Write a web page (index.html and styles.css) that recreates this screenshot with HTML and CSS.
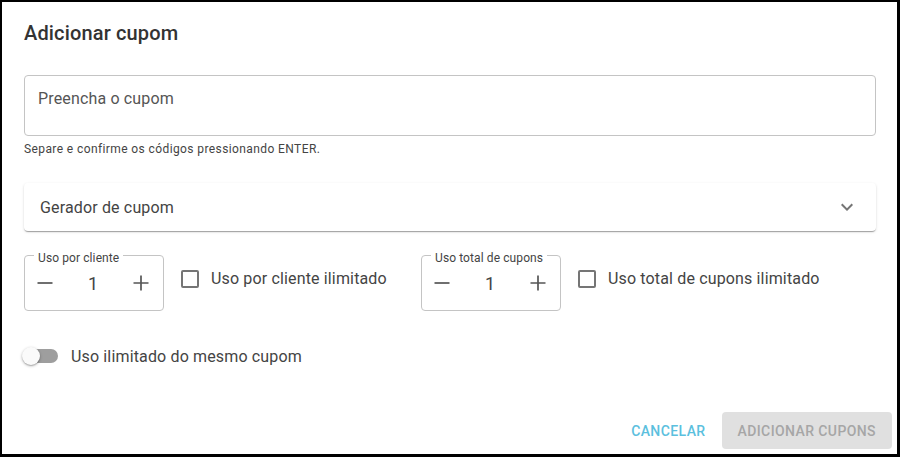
FILE: index.html
```
<html lang="pt-BR">
<head>
    <meta charset="UTF-8">
    <meta name="viewport" content="width=device-width, initial-scale=1.0">
    <title>Adicionar cupom</title>
    <link rel="stylesheet" href="styles.css">
</head>
<body>

    <!-- janela do cupom -->
    <div class="dialog">
        <h2 class="dialog-title">Adicionar cupom</h2>

        <div class="chip-input">
            <span class="placeholder">Preencha o cupom</span>
        </div>
        <p class="helper">Separe e confirme os códigos pressionando ENTER.</p>

        <div class="panel">
            <span>Gerador de cupom</span>
            <svg class="chevron" width="24" height="24" viewBox="0 0 24 24"><path d="M16.59 8.59L12 13.17 7.41 8.59 6 10l6 6 6-6z" fill="#757575"/></svg>
        </div>

        <div class="usage-row">
            <div class="usage-group">
                <div class="counter">
                    <span class="counter-label">Uso por cliente</span>
                    <svg width="24" height="24" viewBox="0 0 24 24"><path d="M4.5 12h15" stroke="#555" stroke-width="1.7"/></svg>
                    <span class="counter-value">1</span>
                    <svg width="24" height="24" viewBox="0 0 24 24"><path d="M4.5 12h15M12 4.5v15" stroke="#555" stroke-width="1.7"/></svg>
                </div>
                <label class="check">
                    <span class="check-box"></span>
                    Uso por cliente ilimitado
                </label>
            </div>
            <div class="usage-group">
                <div class="counter">
                    <span class="counter-label">Uso total de cupons</span>
                    <svg width="24" height="24" viewBox="0 0 24 24"><path d="M4.5 12h15" stroke="#555" stroke-width="1.7"/></svg>
                    <span class="counter-value">1</span>
                    <svg width="24" height="24" viewBox="0 0 24 24"><path d="M4.5 12h15M12 4.5v15" stroke="#555" stroke-width="1.7"/></svg>
                </div>
                <label class="check">
                    <span class="check-box"></span>
                    Uso total de cupons ilimitado
                </label>
            </div>
        </div>

        <div class="switch-row">
            <span class="switch">
                <span class="switch-track"></span>
                <span class="switch-thumb"></span>
            </span>
            <span>Uso ilimitado do mesmo cupom</span>
        </div>

        <div class="actions">
            <button class="btn btn-text">Cancelar</button>
            <button class="btn btn-disabled" disabled>Adicionar cupons</button>
        </div>
    </div>

</body>
</html>
```
FILE: styles.css
```
/* página */
body {
    margin: 0;
    font-family: Roboto, "Noto Sans", Arial, sans-serif;
    color: #444;
    background: #fff;
}

/* janela */
.dialog {
    width: 900px;
    height: 457px;
    box-sizing: border-box;
    border-style: solid;
    border-color: #000;
    border-width: 2px 3px 3px 2px;
    padding: 15px 21px 5px 22px;
    display: flex;
    flex-direction: column;
}

.dialog-title {
    margin: 0;
    font-size: 20px;
    font-weight: 500;
    line-height: 32px;
    letter-spacing: 0.15px;
    color: #333;
}

/* campo do cupom */
.chip-input {
    margin-top: 26px;
    height: 61px;
    box-sizing: border-box;
    border: 1px solid #c4c4c4;
    border-radius: 4px;
    padding: 13px 13px;
    font-size: 16px;
    line-height: 19px;
    letter-spacing: 0.15px;
}

.placeholder { color: #555; }

.helper {
    margin: 5px 0 0 0;
    font-size: 12px;
    line-height: 16px;
    letter-spacing: 0.4px;
    color: #444;
}

/* painel gerador */
.panel {
    margin-top: 26px;
    height: 48px;
    display: flex;
    align-items: center;
    justify-content: space-between;
    padding: 0 17px 0 16px;
    border-radius: 4px;
    font-size: 16px;
    letter-spacing: 0.15px;
    color: #444;
    box-shadow: 0 2px 1px -1px rgba(0, 0, 0, 0.2), 0 1px 1px 0 rgba(0, 0, 0, 0.14), 0 1px 3px 0 rgba(0, 0, 0, 0.12);
}

/* contadores */
.usage-row {
    margin-top: 24px;
    display: flex;
}

.usage-group {
    width: 397px;
    flex: none;
    display: flex;
    align-items: flex-start;
}

.usage-group:last-child { width: auto; }

.counter {
    position: relative;
    flex: none;
    width: 140px;
    height: 56px;
    box-sizing: border-box;
    border: 1px solid #c4c4c4;
    border-radius: 4px;
    padding: 0 10px 0 8px;
    display: flex;
    align-items: center;
    justify-content: space-between;
}

.counter svg { display: block; }

.counter-label {
    position: absolute;
    top: -5px;
    left: 9px;
    padding: 0 4px;
    background: #fff;
    font-size: 12px;
    line-height: 14px;
    letter-spacing: 0.1px;
    color: #444;
}

.counter-value {
    font-size: 18px;
    color: #444;
}

.check {
    margin: 14px 0 0 17px;
    display: flex;
    align-items: center;
    gap: 12px;
    white-space: nowrap;
    font-size: 16px;
    line-height: 19px;
    letter-spacing: 0.15px;
    color: #444;
}

.check-box {
    width: 18px;
    height: 18px;
    box-sizing: border-box;
    border: 2px solid #757575;
    border-radius: 2px;
}

/* interruptor */
.switch-row {
    margin-top: 35px;
    display: flex;
    align-items: center;
    gap: 13px;
    font-size: 16px;
    letter-spacing: 0.15px;
    color: #444;
}

.switch {
    position: relative;
    width: 36px;
    height: 20px;
    margin-left: -2px;
    display: flex;
    align-items: center;
}

.switch-track {
    width: 34px;
    height: 14px;
    margin-left: 2px;
    border-radius: 7px;
    background: #9e9e9e;
}

.switch-thumb {
    position: absolute;
    left: 0;
    top: 1px;
    width: 18px;
    height: 18px;
    border-radius: 50%;
    background: #fafafa;
    box-shadow: 0 1px 3px rgba(0, 0, 0, 0.3), 0 1px 1px rgba(0, 0, 0, 0.14);
}

/* botões */
.actions {
    margin-top: auto;
    margin-right: -16px;
    display: flex;
    justify-content: flex-end;
}

.btn {
    font-family: inherit;
    font-size: 14px;
    font-weight: 500;
    letter-spacing: 0.4px;
    text-transform: uppercase;
    border: none;
    border-radius: 4px;
    height: 37px;
    padding: 0 16px;
    background: none;
}

.btn-text {
    color: #5bc0de;
    cursor: pointer;
}

.btn-disabled {
    background: #e0e0e0;
    color: #a6a6a6;
}
```
